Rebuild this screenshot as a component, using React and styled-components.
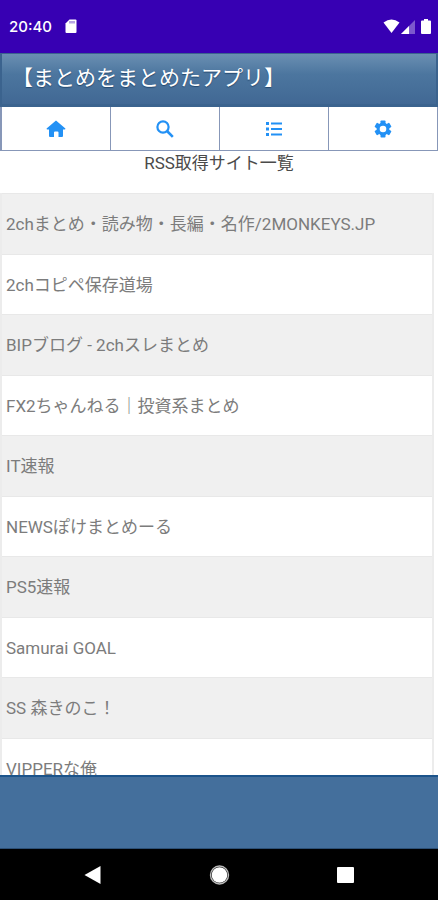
import React from 'react'
import styled, { createGlobalStyle } from 'styled-components'

const GlobalStyle = createGlobalStyle`
    * {
        box-sizing: border-box;
    }
    body {
        margin: 0;
        background: #fff;
        font-family: Roboto, 'Noto Sans CJK JP', sans-serif;
    }
`

const Screen = styled.div`
    display: flex;
    flex-direction: column;
    height: 100vh;
    overflow: hidden;
`

const StatusBar = styled.div`
    flex: none;
    display: flex;
    align-items: center;
    justify-content: space-between;
    height: 53px;
    padding: 0 7px 0 9px;
    background: #3700b3;
    color: #fff;
`

const StatusGroup = styled.div`
    display: flex;
    align-items: center;
    gap: ${props => props.$gap}px;
    svg {
        display: block;
    }
`

const Clock = styled.time`
    font-family: Inter, sans-serif;
    font-size: 15px;
    line-height: 20px;
    font-weight: 500;
`

const Header = styled.header`
    flex: none;
    height: 54px;
    padding: 0 10px;
    border: 2px solid #3b638e;
    border-width: 1px 2px 3px;
    background: linear-gradient(to bottom, #6a8fb2, #4c769f 40%, #416894);
`

const Title = styled.h1`
    margin: 0;
    font-size: 21px;
    line-height: 48px;
    font-weight: 400;
    color: #fff;
    text-shadow: 0 1px 1px #24486e;
    white-space: nowrap;
`

const Tabs = styled.nav`
    flex: none;
    display: grid;
    grid-template-columns: repeat(4, 1fr);
    gap: 1px;
    height: 44px;
    padding: 0 1px 1px 2px;
    background: #8797b8;
`

const Tab = styled.button`
    display: flex;
    align-items: center;
    justify-content: center;
    padding: 0;
    border: 0;
    background: #fff;
    color: #2391f5;
    cursor: pointer;
    svg {
        display: block;
    }
`

const Content = styled.main`
    flex: 1;
    min-height: 0;
    overflow: hidden;
`

const Caption = styled.h2`
    margin: 0 0 18px;
    font-size: 17px;
    line-height: 24px;
    font-weight: 400;
    text-align: center;
    color: #4a4a4a;
`

const SiteList = styled.ul`
    margin: 0 4px 0 0;
    padding: 0;
    list-style: none;
    border: 1px solid #ececec;
    border-width: 0 2px;
`

const SiteItem = styled.li`
    height: 59px;
    background: #fff;
    &:nth-child(odd) {
        height: 62px;
        border: 1px solid #e8e8e8;
        border-width: 1px 0;
        background: #f0f0f0;
    }
`

const SiteLink = styled.a`
    display: flex;
    align-items: center;
    height: 100%;
    padding: 0 4px;
    font-size: 17px;
    line-height: 24px;
    color: #7c7c7c;
    text-decoration: none;
    white-space: nowrap;
`

const Footer = styled.footer`
    flex: none;
    height: 74px;
    border-top: 2px solid #1c548b;
    border-bottom: 1px solid #2c4f75;
    background: #446f9c;
`

const SystemNav = styled.nav`
    flex: none;
    display: flex;
    align-items: center;
    justify-content: center;
    gap: 102px;
    height: 51px;
    background: #000;
`

const SystemButton = styled.button`
    width: 24px;
    height: 24px;
    padding: 0;
    border: 0;
    background: none;
    color: #fff;
    svg {
        display: block;
    }
`

const HomeIcon = () => (
    <svg width="20" height="18" viewBox="0 0 20 18" fill="currentColor">
        <path d="M10 0.6L19.4 8.6Q19.6 9.6 18.6 9.6H17V16Q17 17 16 17H12.500V12.500Q12.500 11.500 11.500 11.500H9Q8 11.500 8 12.500V17H4Q3 17 3 16V9.600H1.400Q0.400 9.600 0.600 8.600Z" />
    </svg>
)

const SearchIcon = () => (
    <svg width="18" height="18" viewBox="0 0 18 18" fill="none" stroke="currentColor">
        <circle cx="7" cy="7" r="5.600" strokeWidth="2.200" />
        <path d="M11 11L16.800 16.800" strokeWidth="2.600" />
    </svg>
)

const ListIcon = () => (
    <svg width="18" height="16" viewBox="0 0 18 16" fill="none" stroke="currentColor">
        <path d="M6 2.500H17M6 8H17M6 13.500H17" strokeWidth="2" />
        <path d="M1 2.500H4M1 8H4M1 13.500H4" strokeWidth="2.800" />
    </svg>
)

const GearIcon = () => (
    <svg width="18" height="18" viewBox="0 0 18 18">
        <g fill="currentColor">
            <rect x="6.500" y="0.500" width="5" height="17" rx="0.800" />
            <rect x="6.500" y="0.500" width="5" height="17" rx="0.800" transform="rotate(60 9 9)" />
            <rect x="6.500" y="0.500" width="5" height="17" rx="0.800" transform="rotate(120 9 9)" />
            <circle cx="9" cy="9" r="6.400" />
        </g>
        <circle cx="9" cy="9" r="3.300" fill="#fff" />
    </svg>
)

const SdCard = () => (
    <svg width="12" height="15" viewBox="0 0 12 15">
        <path d="M4.500 0.500H10.500Q11.500 0.500 11.500 1.500V13Q11.500 14 10.500 14H1.500Q0.500 14 0.500 13V4.500Z" fill="#fff" />
        <path d="M5 2V4.500M7 2V4.500M9 2V4.500" stroke="#3700b3" strokeWidth="1" opacity="0.7" />
    </svg>
)

const Wifi = () => (
    <svg width="17" height="15" viewBox="0 0 17 15">
        <path d="M0.500 3.500Q8.500 -2.500 16.500 3.500L8.500 14Z" fill="#fff" />
    </svg>
)

const Signal = () => (
    <svg width="14" height="14" viewBox="0 0 14 14">
        <path d="M14 0V14H0Z" fill="#fff" opacity="0.35" />
        <path d="M8 6V14H0Z" fill="#fff" />
    </svg>
)

const Battery = () => (
    <svg width="10" height="15" viewBox="0 0 10 15">
        <path d="M3 0H7V1.500H9Q10 1.500 10 2.500V14Q10 15 9 15H1Q0 15 0 14V2.500Q0 1.500 1 1.500H3Z" fill="#fff" />
    </svg>
)

const tabs = [
    { label: 'ホーム', icon: HomeIcon },
    { label: '検索', icon: SearchIcon },
    { label: '一覧', icon: ListIcon },
    { label: '設定', icon: GearIcon },
]

const sites = [
    '2chまとめ・読み物・長編・名作/2MONKEYS.JP',
    '2chコピペ保存道場',
    'BIPブログ - 2chスレまとめ',
    'FX2ちゃんねる｜投資系まとめ',
    'IT速報',
    'NEWSぽけまとめーる',
    'PS5速報',
    'Samurai GOAL',
    'SS 森きのこ！',
    'VIPPERな俺',
]

export default () => {
    return (
        <Screen>
            <GlobalStyle />
            <StatusBar>
                <StatusGroup $gap={13}>
                    <Clock>20:40</Clock>
                    <SdCard />
                </StatusGroup>
                <StatusGroup $gap={6}>
                    <StatusGroup $gap={1}>
                        <Wifi />
                        <Signal />
                    </StatusGroup>
                    <Battery />
                </StatusGroup>
            </StatusBar>
            <Header>
                <Title>【まとめをまとめたアプリ】</Title>
            </Header>
            <Tabs>
                {
                    tabs.map(({ label, icon: Icon }) => {
                        return <Tab key={label} aria-label={label}><Icon /></Tab>
                    })
                }
            </Tabs>
            <Content>
                <Caption>RSS取得サイト一覧</Caption>
                <SiteList>
                    {
                        sites.map(site => {
                            return (
                                <SiteItem key={site}>
                                    <SiteLink href="#">{site}</SiteLink>
                                </SiteItem>
                            )
                        })
                    }
                </SiteList>
            </Content>
            <Footer />
            <SystemNav>
                <SystemButton aria-label="戻る">
                    <svg width="24" height="24" viewBox="0 0 24 24">
                        <path d="M19.500 3V21L3.500 12Z" fill="currentColor" />
                    </svg>
                </SystemButton>
                <SystemButton aria-label="ホームへ">
                    <svg width="24" height="24" viewBox="0 0 24 24">
                        <circle cx="12.500" cy="12" r="7.800" fill="currentColor" />
                        <circle cx="12.500" cy="12" r="9" fill="none" stroke="#bbb" strokeWidth="1.400" />
                    </svg>
                </SystemButton>
                <SystemButton aria-label="アプリ履歴">
                    <svg width="24" height="24" viewBox="0 0 24 24">
                        <rect x="4" y="4" width="17" height="16" rx="1" fill="currentColor" />
                    </svg>
                </SystemButton>
            </SystemNav>
        </Screen>
    )
}
